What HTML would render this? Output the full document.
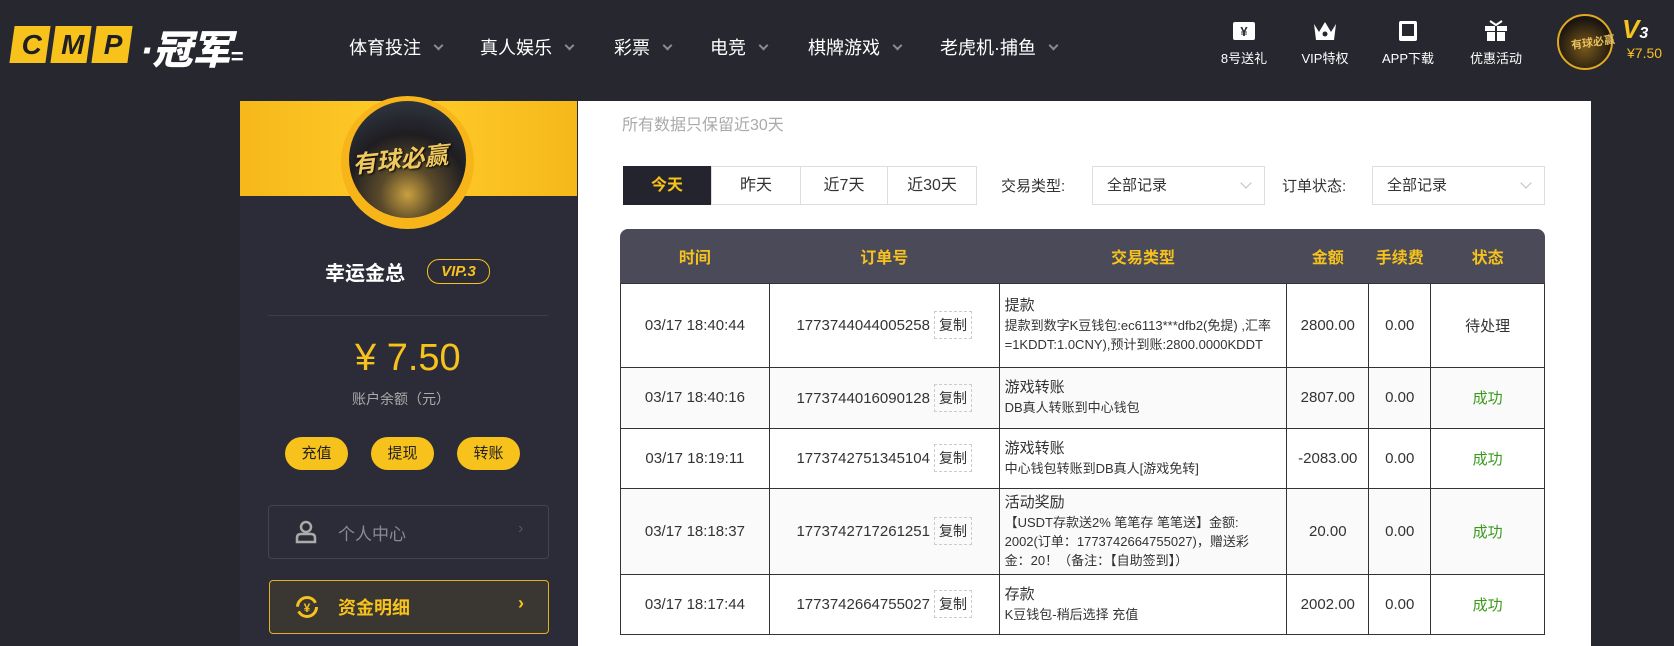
<!DOCTYPE html>
<html><head><meta charset="utf-8"><style>
*{margin:0;padding:0;box-sizing:border-box}
body{width:1674px;height:646px;overflow:hidden;background:#272730;font-family:"Liberation Sans","Noto Sans CJK SC",sans-serif;position:relative}
.a{position:absolute}
.nav{color:#fff;font-size:18px;top:34px}
.nav i{display:inline-block;width:7px;height:7px;border-right:2px solid #8a8a94;border-bottom:2px solid #8a8a94;transform:rotate(45deg);margin-left:14px;position:relative;top:-5px}
.ti{color:#fff;font-size:13px;text-align:center;width:80px;top:20px}
.ti svg{display:block;margin:0 auto 6px}
.sb{left:240px;top:101px;width:337px;height:545px;background:#2c2c38}
.btn{top:437px;width:63px;height:33px;border-radius:17px;background:#f7c21c;color:#222;font-size:15px;text-align:center;line-height:33px}
.panel{left:578px;top:101px;width:1013px;height:545px;background:#fff}
table{border-collapse:collapse;position:absolute;left:620px;top:229px;width:925px;font-size:15px;color:#333}
th{background:#4a4a58;color:#f7c21c;font-size:16px;height:54px;font-weight:bold}
td{border:1px solid #333;text-align:center;vertical-align:middle}
td.d{text-align:left;padding-left:5px;font-size:15px;line-height:20px}
td.d small{font-size:13px;display:block;line-height:19px;max-width:268px}
.cp{display:inline-block;border:1px dashed #ccc;font-size:14px;padding:3px 4px;margin-left:4px}
.ok{color:#3a9a1c}
tr.g td{background:#fafafa}
.tab{top:166px;height:39px;border:1px solid #ddd;text-align:center;line-height:37px;font-size:16px;color:#333}
.sel{top:166px;height:39px;border:1px solid #ddd;font-size:15px;color:#333;line-height:37px;padding-left:14px}
.sel:after{content:"";position:absolute;right:14px;top:12px;width:7px;height:7px;border-right:1px solid #bbb;border-bottom:1px solid #bbb;transform:rotate(45deg)}
</style></head><body>
<!-- logo -->
<div class="a" style="left:12px;top:26px;width:36px;height:37px;background:#f7c21c;transform:skewX(-8deg)"></div>
<div class="a" style="left:53px;top:26px;width:36px;height:37px;background:#f7c21c;transform:skewX(-8deg)"></div>
<div class="a" style="left:94px;top:26px;width:36px;height:37px;background:#f7c21c;transform:skewX(-8deg)"></div>
<div class="a" style="left:12px;top:27px;width:120px;font:italic 900 28px 'Liberation Sans',sans-serif;color:#1e1e24;display:flex;justify-content:space-around;line-height:36px"><span>C</span><span>M</span><span>P</span></div>
<div class="a" style="left:140px;top:18px;color:#fff;font:italic 900 40px 'Liberation Sans','Noto Sans CJK SC',sans-serif;letter-spacing:-1px">·冠军<span style="font-size:22px">=</span></div>
<div class="a nav" style="left:349px">体育投注<i></i></div>
<div class="a nav" style="left:480px">真人娱乐<i></i></div>
<div class="a nav" style="left:614px">彩票<i></i></div>
<div class="a nav" style="left:710px">电竞<i></i></div>
<div class="a nav" style="left:808px">棋牌游戏<i></i></div>
<div class="a nav" style="left:940px">老虎机·捕鱼<i></i></div>
<div class="a ti" style="left:1204px"><svg width="24" height="22"><rect x="1" y="2" width="22" height="18" rx="2" fill="#fff"/><text x="12" y="16" font-size="13" text-anchor="middle" fill="#272730" font-weight="bold">¥</text></svg>8号送礼</div>
<div class="a ti" style="left:1285px"><svg width="26" height="22"><path d="M2 4 L7 12 L13 2 L19 12 L24 4 L22 20 L4 20 Z" fill="#fff"/><circle cx="13" cy="14" r="2.5" fill="#272730"/></svg>VIP特权</div>
<div class="a ti" style="left:1368px"><svg width="20" height="22"><rect x="1" y="1" width="18" height="20" rx="2" fill="#fff"/><rect x="4" y="4" width="12" height="12" fill="#272730"/></svg>APP下载</div>
<div class="a ti" style="left:1456px"><svg width="24" height="22"><rect x="1" y="6" width="22" height="5" fill="#fff"/><rect x="3" y="12" width="18" height="9" fill="#fff"/><rect x="11" y="6" width="2" height="15" fill="#272730"/><path d="M6 1 L12 5 L18 1" stroke="#fff" stroke-width="2" fill="none"/></svg>优惠活动</div>
<div class="a" style="left:1557px;top:14px;width:56px;height:56px;border-radius:50%;border:2px solid #e0a920;background:radial-gradient(circle at 50% 60%,#7a5a1a,#1a1510 70%)"></div>
<div class="a" style="left:1571px;top:34px;color:#e8c060;font:bold 11px 'Noto Sans CJK SC',sans-serif;transform:rotate(-8deg)">有球必赢</div>
<div class="a" style="left:1622px;top:14px;color:#f7c21c;font:900 italic 26px 'Liberation Sans',sans-serif">V<span style="color:#fff;font-size:16px">3</span></div>
<div class="a" style="left:1627px;top:45px;color:#f7c21c;font-size:14px">¥7.50</div>

<!-- sidebar -->
<div class="a sb"></div>
<div class="a" style="left:240px;top:101px;width:337px;height:95px;background:linear-gradient(90deg,#f6b81a,#ffcc2a 50%,#f6b81a)"></div>
<div class="a" style="left:341px;top:96px;width:133px;height:133px;border-radius:50%;background:#f7b51a"></div>
<div class="a" style="left:349px;top:101px;width:117px;height:117px;border-radius:50%;background:radial-gradient(circle at 50% 80%,#c9a040 0,#5a4a2a 25%,#1e1d22 55%,#38404a 100%)"></div>
<div class="a" style="left:352px;top:140px;color:#f0c860;font:bold italic 24px 'Noto Sans CJK SC',sans-serif;transform:rotate(-6deg);text-shadow:1px 1px 2px #000">有球必赢</div>
<div class="a" style="left:325px;top:257px;color:#fff;font:bold 20px 'Noto Sans CJK SC',sans-serif">幸运金总</div>
<div class="a" style="left:427px;top:259px;width:63px;height:25px;border:1px solid #f7c21c;border-radius:12px;color:#f7c21c;font:bold italic 15px 'Liberation Sans',sans-serif;text-align:center;line-height:23px">VIP.3</div>
<div class="a" style="left:268px;top:315px;width:280px;height:1px;background:#3e3e4a"></div>
<div class="a" style="left:355px;top:336px;color:#f7c21c;font-size:38px;line-height:44px">¥ 7.50</div>
<div class="a" style="left:352px;top:389px;color:#aaa;font-size:14px">账户余额（元）</div>
<div class="a btn" style="left:285px">充值</div>
<div class="a btn" style="left:371px">提现</div>
<div class="a btn" style="left:457px">转账</div>
<div class="a" style="left:268px;top:505px;width:281px;height:54px;border:1px solid #44444f;border-radius:4px"></div>
<svg class="a" style="left:295px;top:520px" width="22" height="24"><circle cx="11" cy="7" r="5" stroke="#aaa" stroke-width="2.5" fill="none"/><path d="M2 22 V18 Q2 14 6 14 H16 Q20 14 20 18 V22 Z" stroke="#aaa" stroke-width="2.5" fill="none"/></svg>
<div class="a" style="left:338px;top:520px;color:#8a8a94;font-size:17px">个人中心</div>
<div class="a" style="left:518px;top:520px;color:#55555f;font-size:16px">›</div>
<div class="a" style="left:269px;top:580px;width:280px;height:54px;border:1px solid #e2b320;border-radius:4px;background:#3a3631"></div>
<svg class="a" style="left:295px;top:595px" width="24" height="24"><circle cx="12" cy="12" r="9.5" stroke="#f7c21c" stroke-width="3" fill="none" stroke-dasharray="25 5"/><text x="12" y="17" font-size="12" text-anchor="middle" fill="#f7c21c" font-weight="bold">¥</text></svg>
<div class="a" style="left:338px;top:594px;color:#f7c21c;font:bold 18px 'Noto Sans CJK SC',sans-serif">资金明细</div>
<div class="a" style="left:518px;top:593px;color:#f7c21c;font:bold 18px sans-serif">›</div>

<!-- panel -->
<div class="a panel"></div>
<div class="a" style="left:622px;top:111px;color:#aaa;font-size:16px">所有数据只保留近30天</div>
<div class="a tab" style="left:623px;width:88px;background:#24242e;border-color:#24242e;color:#f7c21c;font-weight:bold">今天</div>
<div class="a tab" style="left:711px;width:90px">昨天</div>
<div class="a tab" style="left:801px;width:87px;border-left:none">近7天</div>
<div class="a tab" style="left:888px;width:89px;border-left:none">近30天</div>
<div class="a" style="left:1001px;top:175px;color:#333;font-size:15px">交易类型:</div>
<div class="a sel" style="left:1092px;width:173px">全部记录</div>
<div class="a" style="left:1282px;top:175px;color:#333;font-size:15px">订单状态:</div>
<div class="a sel" style="left:1372px;width:173px">全部记录</div>
<div class="a" style="left:620px;top:229px;width:925px;height:54px;background:#4a4a58;border-radius:8px 8px 0 0"></div>
<table>
<colgroup><col style="width:149px"><col style="width:230px"><col style="width:288px"><col style="width:82px"><col style="width:62px"><col style="width:114px"></colgroup>
<tr><th style="background:transparent">时间</th><th style="background:transparent">订单号</th><th style="background:transparent">交易类型</th><th style="background:transparent">金额</th><th style="background:transparent">手续费</th><th style="background:transparent">状态</th></tr>
<tr style="height:84px"><td>03/17 18:40:44</td><td>1773744044005258<span class="cp">复制</span></td><td class="d">提款<small>提款到数字K豆钱包:ec6113***dfb2(免提) ,汇率=1KDDT:1.0CNY),预计到账:2800.0000KDDT</small></td><td>2800.00</td><td>0.00</td><td>待处理</td></tr>
<tr class="g" style="height:61px"><td>03/17 18:40:16</td><td>1773744016090128<span class="cp">复制</span></td><td class="d">游戏转账<small>DB真人转账到中心钱包</small></td><td>2807.00</td><td>0.00</td><td class="ok">成功</td></tr>
<tr style="height:60px"><td>03/17 18:19:11</td><td>1773742751345104<span class="cp">复制</span></td><td class="d">游戏转账<small>中心钱包转账到DB真人[游戏免转]</small></td><td>-2083.00</td><td>0.00</td><td class="ok">成功</td></tr>
<tr class="g" style="height:86px"><td>03/17 18:18:37</td><td>1773742717261251<span class="cp">复制</span></td><td class="d">活动奖励<small>【USDT存款送2% 笔笔存 笔笔送】金额: 2002(订单：1773742664755027)，赠送彩金：20！（备注：【自助签到】）</small></td><td>20.00</td><td>0.00</td><td class="ok">成功</td></tr>
<tr style="height:60px"><td>03/17 18:17:44</td><td>1773742664755027<span class="cp">复制</span></td><td class="d">存款<small>K豆钱包-稍后选择 充值</small></td><td>2002.00</td><td>0.00</td><td class="ok">成功</td></tr>
</table>
</body></html>
